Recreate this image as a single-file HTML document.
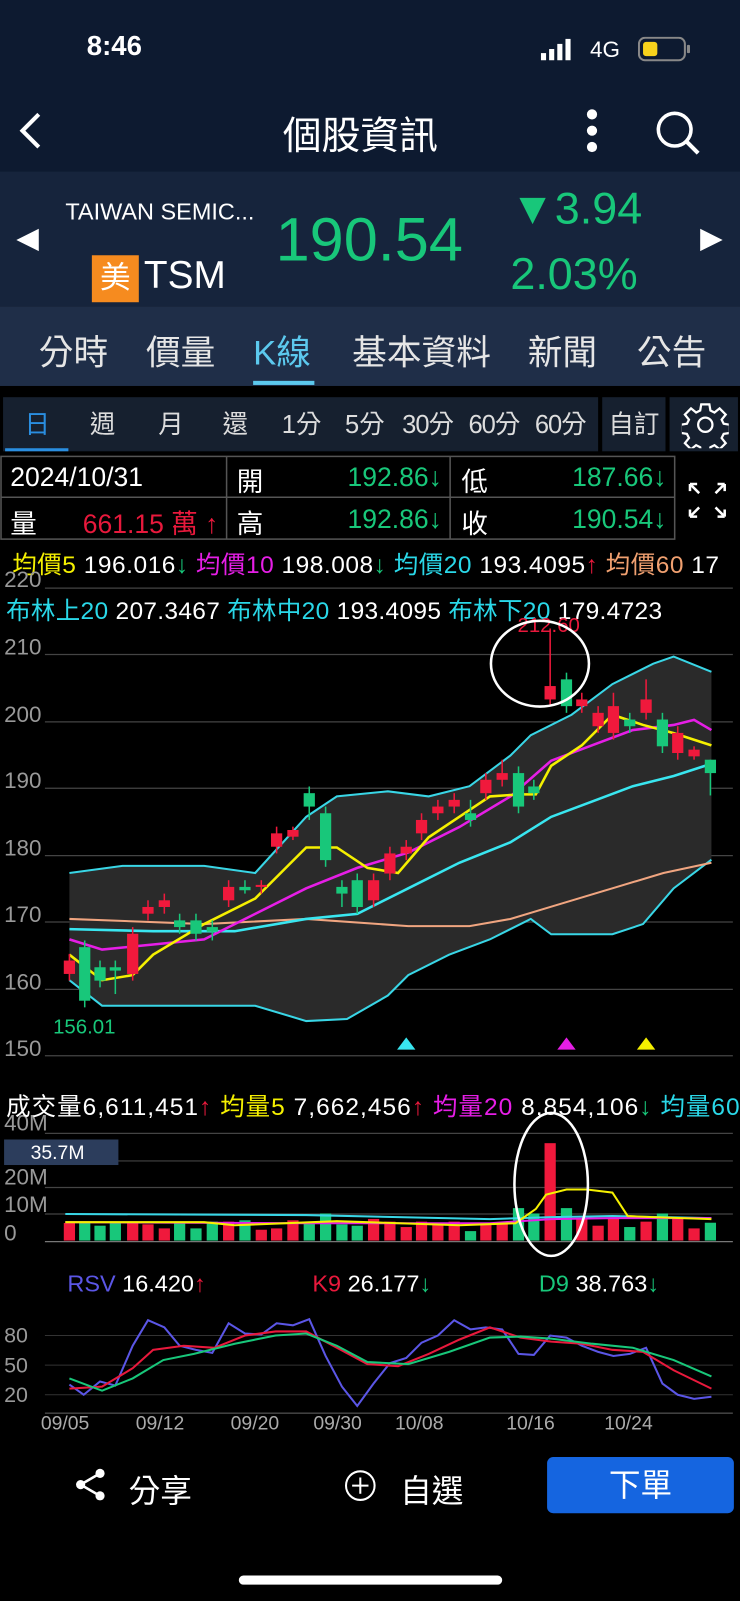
<!DOCTYPE html>
<html><head><meta charset="utf-8"><style>
html,body{margin:0;padding:0;background:#000;overflow:hidden;width:740px;height:1601px}
#w{position:absolute;left:0;top:0;width:725px;height:1568px;transform-origin:0 0;transform:scale(1.02069,1.02105);font-family:"Liberation Sans","Noto Sans CJK TC",sans-serif;color:#fff;background:#000}
.a{position:absolute;white-space:nowrap}
.r{position:absolute;white-space:nowrap;text-align:right}
</style></head><body><div id="w">
<div class="a" style="left:0;top:0;width:725px;height:168px;background:#0d1a30"></div>
<div class="a" style="left:85px;top:30px;font-size:27px;font-weight:bold">8:46</div>
<svg class="a" style="left:528px;top:38px" width="40" height="22"><rect x="2" y="14" width="5" height="7" fill="#fff"/><rect x="10" y="10" width="5" height="11" fill="#fff"/><rect x="18" y="5" width="5" height="16" fill="#fff"/><rect x="26" y="0" width="5" height="21" fill="#fff"/></svg>
<div class="a" style="left:578px;top:36px;font-size:22px">4G</div>
<svg class="a" style="left:625px;top:36px" width="52" height="26"><rect x="1" y="1" width="45" height="22" rx="6" fill="none" stroke="#888" stroke-width="2"/><rect x="5" y="5" width="14" height="14" rx="3" fill="#f7d21c"/><rect x="48" y="8" width="3" height="8" rx="1" fill="#888"/></svg>
<svg class="a" style="left:16px;top:108px" width="30" height="40"><path d="M22 4 L6 20 L22 36" stroke="#fff" stroke-width="4" fill="none"/></svg>
<div class="a" style="left:277px;top:102px;font-size:38px">個股資訊</div>
<svg class="a" style="left:568px;top:104px" width="24" height="50"><circle cx="12" cy="8" r="5" fill="#fff"/><circle cx="12" cy="24" r="5" fill="#fff"/><circle cx="12" cy="40" r="5" fill="#fff"/></svg>
<svg class="a" style="left:640px;top:106px" width="48" height="48"><circle cx="21" cy="21" r="16" stroke="#fff" stroke-width="3.5" fill="none"/><path d="M33 33 L44 44" stroke="#fff" stroke-width="4"/></svg>
<div class="a" style="left:0;top:168px;width:725px;height:132px;background:#16243c"></div>
<svg class="a" style="left:14px;top:222px" width="28" height="26"><path d="M24 2 L2 13 L24 24Z" fill="#fff"/></svg>
<svg class="a" style="left:684px;top:222px" width="28" height="26"><path d="M2 2 L24 13 L2 24Z" fill="#fff"/></svg>
<div class="a" style="left:64px;top:194px;font-size:23px">TAIWAN SEMIC...</div>
<div class="a" style="left:90px;top:250px;width:46px;height:46px;background:#f68b1f;font-size:30px;text-align:center;line-height:46px">美</div>
<div class="a" style="left:141px;top:249px;font-size:38px">TSM</div>
<div class="a" style="left:270px;top:200px;font-size:60px;color:#18c77a">190.54</div>
<div class="a" style="left:500px;top:180px;font-size:44px;color:#18c77a">▼3.94</div>
<div class="a" style="left:500px;top:244px;font-size:44px;color:#18c77a">2.03%</div>
<div class="a" style="left:0;top:300px;width:725px;height:78px;background:#1f2e48"></div>
<div class="a" style="left:38px;top:318px;font-size:34px;color:#e6e6e6">分時</div>
<div class="a" style="left:143px;top:318px;font-size:34px;color:#e6e6e6">價量</div>
<div class="a" style="left:248px;top:318px;font-size:34px;color:#5cc9ee">K線</div>
<div class="a" style="left:248px;top:373px;width:60px;height:4px;background:#5cc9ee"></div>
<div class="a" style="left:345px;top:318px;font-size:34px;color:#e6e6e6">基本資料</div>
<div class="a" style="left:517px;top:318px;font-size:34px;color:#e6e6e6">新聞</div>
<div class="a" style="left:624px;top:318px;font-size:34px;color:#e6e6e6">公告</div>
<div class="a" style="left:3px;top:389px;width:583px;height:53px;background:#16202f"></div>
<div class="a" style="left:590px;top:389px;width:62px;height:53px;background:#16202f"></div>
<div class="a" style="left:656px;top:389px;width:67px;height:53px;background:#16202f"></div>
<div class="a" style="left:5px;top:439px;width:62px;height:3px;background:#2a8ee0"></div>
<div class="a" style="left:0;top:396px;font-size:25px;color:#ddd;width:600px">
<span class="a" style="left:24px;color:#2a8ee0">日</span><span class="a" style="left:88px">週</span><span class="a" style="left:155px">月</span><span class="a" style="left:218px">還</span><span class="a" style="left:276px">1分</span><span class="a" style="left:338px">5分</span><span class="a" style="left:394px;letter-spacing:-1px">30分</span><span class="a" style="left:459px;letter-spacing:-1px">60分</span><span class="a" style="left:524px;letter-spacing:-1px">60分</span><span class="a" style="left:596px">自訂</span></div>
<svg class="a" style="left:668px;top:393px" width="46" height="46" viewBox="0 0 46 46"><path d="M19 3h8l1 6 4 2 5-4 6 6-4 5 2 4 6 1v8l-6 1-2 4 4 5-6 6-5-4-4 2-1 6h-8l-1-6-4-2-5 4-6-6 4-5-2-4-6-1v-8l6-1 2-4-4-5 6-6 5 4 4-2z" fill="none" stroke="#fff" stroke-width="2.2"/><circle cx="23" cy="23" r="7" fill="none" stroke="#fff" stroke-width="2.2"/></svg>
<svg class="a" style="left:0;top:446px" width="725" height="84"><g fill="none" stroke="#555" stroke-width="1.5"><rect x="1" y="1" width="660" height="81"/><line x1="1" y1="41" x2="661" y2="41"/><line x1="222" y1="1" x2="222" y2="82"/><line x1="441" y1="1" x2="441" y2="82"/></g>
<g stroke="#fff" stroke-width="2.5" fill="none"><path d="M676 28l9 9M676 28v7M676 28h7M710 28l-9 9M710 28v7M710 28h-7M676 60l9-9M676 60v-7M676 60h7M710 60l-9-9M710 60v-7M710 60h-7"/></g></svg>
<div class="a" style="left:10px;top:452px;font-size:26px">2024/10/31</div>
<div class="a" style="left:232px;top:452px;font-size:26px">開</div>
<div class="r" style="left:250px;width:183px;top:452px;font-size:26px;color:#18c77a">192.86↓</div>
<div class="a" style="left:452px;top:452px;font-size:26px">低</div>
<div class="r" style="left:470px;width:183px;top:452px;font-size:26px;color:#18c77a">187.66↓</div>
<div class="a" style="left:10px;top:493px;font-size:26px">量</div>
<div class="r" style="left:40px;width:174px;top:493px;font-size:26px;color:#e8193c">661.15 萬 ↑</div>
<div class="a" style="left:232px;top:493px;font-size:26px">高</div>
<div class="r" style="left:250px;width:183px;top:493px;font-size:26px;color:#18c77a">192.86↓</div>
<div class="a" style="left:452px;top:493px;font-size:26px">收</div>
<div class="r" style="left:470px;width:183px;top:493px;font-size:26px;color:#18c77a">190.54↓</div>
<div class="a" style="left:12px;top:533px;font-size:24px;letter-spacing:0.5px"><span style="color:#f5f000">均價5</span> 196.016<span style="color:#18c77a">↓</span> <span style="color:#e61ee6">均價10</span> 198.008<span style="color:#18c77a">↓</span> <span style="color:#2ad8e8">均價20</span> 193.4095<span style="color:#e8193c">↑</span> <span style="color:#f0a070">均價60</span> 17</div>
<div class="a" style="left:6px;top:578px;font-size:24px;letter-spacing:0.3px"><span style="color:#2ad8e8">布林上20</span> 207.3467 <span style="color:#2ad8e8">布林中20</span> 193.4095 <span style="color:#2ad8e8">布林下20</span> 179.4723</div>
<svg class="a" style="left:0;top:0" width="725" height="1568">
<g stroke="#444" stroke-width="1.2"><line x1="44" y1="576" x2="718" y2="576"/><line x1="44" y1="641" x2="718" y2="641"/><line x1="44" y1="707" x2="718" y2="707"/><line x1="44" y1="772" x2="718" y2="772"/><line x1="44" y1="838" x2="718" y2="838"/><line x1="44" y1="903" x2="718" y2="903"/><line x1="44" y1="969" x2="718" y2="969"/><line x1="44" y1="1034" x2="718" y2="1034"/>
<line x1="44" y1="1110" x2="718" y2="1110"/><line x1="44" y1="1137" x2="718" y2="1137"/><line x1="44" y1="1163" x2="718" y2="1163"/><line x1="44" y1="1189" x2="718" y2="1189"/><line x1="44" y1="1216" x2="718" y2="1216" stroke="#777"/></g>
<g fill="#999" font-size="22" font-family="Liberation Sans"><text x="4" y="575">220</text><text x="4" y="641">210</text><text x="4" y="707">200</text><text x="4" y="772">190</text><text x="4" y="838">180</text><text x="4" y="903">170</text><text x="4" y="969">160</text><text x="4" y="1034">150</text>
<text x="4" y="1107">40M</text><text x="4" y="1160">20M</text><text x="4" y="1187">10M</text><text x="4" y="1215">0</text></g>
<path d="M68 855 L120 848 200 848 250 855 300 800 330 780 380 775 420 780 460 770 500 740 520 720 560 700 600 670 640 650 660 643 697 658 L697 842 660 870 630 905 600 915 540 915 520 900 480 920 440 935 400 955 380 975 340 998 300 1000 250 985 150 985 100 985 68 960Z" fill="#2a2a2a"/>
<g fill="none" stroke-width="2"><polyline stroke="#39d6e6" points="68,855 120,848 200,848 250,855 300,800 330,780 380,775 420,780 460,770 500,740 520,720 560,700 600,670 640,650 660,643 697,658"/>
<polyline stroke="#39d6e6" points="68,960 100,985 150,985 250,985 300,1000 340,998 380,975 400,955 440,935 480,920 520,900 540,915 600,915 630,905 660,870 697,842"/>
<polyline stroke="#f0a580" points="68,900 200,905 300,900 400,907 460,907 500,900 540,888 600,870 650,855 697,845"/>
<polyline stroke="#39e6f0" stroke-width="2.5" points="68,910 150,912 230,912 300,900 350,895 400,870 450,845 500,825 540,800 580,785 620,770 660,760 697,748"/>
<polyline stroke="#e61ee6" stroke-width="2.5" points="68,920 100,930 150,925 200,920 250,895 300,870 350,850 400,835 450,810 500,780 540,745 580,730 620,715 660,710 680,705 697,715"/>
<polyline stroke="#f5f000" stroke-width="2.5" points="68,935 100,960 130,955 150,935 200,905 250,880 280,850 300,830 330,830 360,850 390,855 420,820 450,800 480,780 510,778 525,778 540,750 570,730 600,700 630,710 660,718 697,730"/></g>
<g id="c"></g>
<text x="52" y="1012" fill="#18c77a" font-size="20" font-family="Liberation Sans">156.01</text>
<text x="507" y="619" fill="#e8193c" font-size="20" font-family="Liberation Sans">212.60</text>
<ellipse cx="529" cy="650" rx="48" ry="42" fill="none" stroke="#fff" stroke-width="2.5"/>
<path d="M389 1028 L398 1016 L407 1028Z" fill="#39e6f0"/><path d="M546 1028 L555 1016 L564 1028Z" fill="#e61ee6"/><path d="M624 1028 L633 1016 L642 1028Z" fill="#f5f000"/>
<g id="v"></g>
<g fill="none" stroke-width="2"><polyline stroke="#39d6e6" points="64,1189 300,1190 480,1194 540,1192 600,1191 697,1193"/><polyline stroke="#e61ee6" points="64,1197 300,1198 480,1198 540,1194 600,1193 697,1193"/><polyline stroke="#f5f000" points="64,1197 200,1197 230,1200 330,1196 450,1200 505,1198 525,1184 535,1170 555,1165 575,1165 600,1168 615,1191 640,1192 697,1194"/></g>
<rect x="4" y="1116" width="112" height="25" fill="#2c3d5c"/><text x="30" y="1135" fill="#fff" font-size="19" font-family="Liberation Sans">35.7M</text>
<ellipse cx="540" cy="1160" rx="36" ry="70" fill="none" stroke="#fff" stroke-width="2.5"/>
<g stroke="#333" stroke-width="1"><line x1="44" y1="1308" x2="718" y2="1308"/><line x1="44" y1="1337" x2="718" y2="1337"/><line x1="44" y1="1366" x2="718" y2="1366"/><line x1="44" y1="1384" x2="718" y2="1384" stroke="#666"/></g>
<g fill="#999" font-size="21" font-family="Liberation Sans"><text x="4" y="1315">80</text><text x="4" y="1344">50</text><text x="4" y="1373">20</text></g>
<g fill="none" stroke-width="2"><polyline stroke="#5b56e6" points="68,1356 82,1366 98,1353 113,1357 130,1318 145,1293 161,1300 176,1318 192,1322 208,1325 224,1296 240,1306 256,1307 271,1296 287,1298 303,1292 319,1328 335,1358 350,1377 366,1355 382,1335 398,1330 413,1315 429,1308 445,1293 461,1302 476,1300 492,1302 508,1326 523,1327 539,1308 555,1310 570,1318 586,1324 601,1328 617,1326 633,1320 649,1355 664,1366 680,1370 697,1368"/>
<polyline stroke="#e8193c" points="68,1360 100,1358 130,1340 150,1322 180,1318 210,1320 240,1308 270,1304 300,1304 330,1320 360,1336 390,1338 420,1326 450,1312 480,1300 510,1310 540,1314 570,1316 600,1322 630,1324 660,1342 697,1360"/>
<polyline stroke="#18c77a" points="68,1350 100,1362 130,1350 160,1332 190,1326 230,1316 270,1308 300,1306 330,1318 360,1334 400,1336 440,1324 480,1310 510,1309 540,1311 580,1316 620,1320 660,1332 697,1348"/></g>
<g fill="#aaa" font-size="19" font-family="Liberation Sans"><text x="40" y="1400">09/05</text><text x="133" y="1400">09/12</text><text x="226" y="1400">09/20</text><text x="307" y="1400">09/30</text><text x="387" y="1400">10/08</text><text x="496" y="1400">10/16</text><text x="592" y="1400">10/24</text></g>
</svg>
<div class="a" style="left:6px;top:1064px;font-size:24px;letter-spacing:1px">成交量6,611,451<span style="color:#e8193c">↑</span> <span style="color:#f5f000">均量5</span> 7,662,456<span style="color:#e8193c">↑</span> <span style="color:#e61ee6">均量20</span> 8,854,106<span style="color:#18c77a">↓</span> <span style="color:#2ad8e8">均量60</span></div>
<div class="a" style="left:66px;top:1244px;font-size:23px"><span style="color:#5b56e6">RSV</span> 16.420<span style="color:#e8193c">↑</span></div>
<div class="a" style="left:306px;top:1244px;font-size:23px"><span style="color:#e8193c">K9</span> 26.177<span style="color:#18c77a">↓</span></div>
<div class="a" style="left:528px;top:1244px;font-size:23px"><span style="color:#18c77a">D9</span> 38.763<span style="color:#18c77a">↓</span></div>
<svg class="a" style="left:72px;top:1437px" width="34" height="34"><circle cx="26" cy="6" r="4.5" fill="#fff"/><circle cx="7" cy="17" r="4.5" fill="#fff"/><circle cx="26" cy="28" r="4.5" fill="#fff"/><path d="M26 6 L7 17 L26 28" stroke="#fff" stroke-width="2.5" fill="none"/></svg>
<div class="a" style="left:126px;top:1435px;font-size:31px">分享</div>
<svg class="a" style="left:336px;top:1438px" width="34" height="34"><circle cx="17" cy="17" r="14" fill="none" stroke="#fff" stroke-width="2"/><path d="M17 9v16M9 17h16" stroke="#fff" stroke-width="2"/></svg>
<div class="a" style="left:392px;top:1435px;font-size:31px">自選</div>
<div class="a" style="left:536px;top:1427px;width:183px;height:55px;background:#1565e0;border-radius:6px;font-size:31px;text-align:center;line-height:55px">下單</div>
<div class="a" style="left:234px;top:1543px;width:258px;height:9px;border-radius:5px;background:#fff"></div>
</div>
<script>
var D=[[68,161,163,164,160],[83,165,157,166,156.01],[98,162,160,163,159],[113,162,161.5,163,158],[130,161,167,168,160],[145,170,171,172,169],[161,171,172,173,170],[176,169,168,170,167],[192,169,167,170,166],[208,168,167.3,169,166],[224,172,174,175,171],[240,174,173.5,175,173],[256,174,174.3,175,173],[271,180,182,183,179],[287,181.5,182.5,183,181],[303,188,186,189,184],[319,185,178,186,177],[335,174,173,175,171],[350,175,171,176,170],[366,172,175,176,171],[382,176,179,180,175],[398,179,180,181,178],[413,182,184,185,181],[429,185,186,187,184],[445,186,187,188,185],[461,185,184,187,183],[476,188,190,191,187],[492,190,191,193,189],[508,191,186,192,185],[523,189,188,190,187],[539,202,204,212.6,201],[555,205,201,206,200],[570,201,202,203,200],[586,198,200,201,197],[601,197,201,203,196],[617,199,198,200,197],[633,200,202,205,199],[649,199,195,200,194],[664,194,197,198,193],[680,193.5,194.5,195,193],[696,193,191,193,187.66]];
function y(p){return 567+(220-p)*6.557}
var s='',v='';
var vols=[6.5,7,5.5,7,7,6,4.5,7,4.5,7,7,7.5,4,4.5,7.5,7,10,6,5.5,8,7,5,7,6,7,3.5,6,6,12,10,36,12,8,5.5,8,5,7,10,8,4.5,6.6];
D.forEach(function(d,i){var up=d[2]>=d[1],c=up?'#f0193c':'#18c77a';var t=y(Math.max(d[1],d[2])),b=y(Math.min(d[1],d[2]));if(b-t<2)b=t+2;
s+='<line x1="'+d[0]+'" x2="'+d[0]+'" y1="'+y(d[3])+'" y2="'+y(d[4])+'" stroke="'+c+'" stroke-width="1.5"/><rect x="'+(d[0]-5.5)+'" y="'+t+'" width="11" height="'+(b-t)+'" fill="'+c+'"/>';
var h=vols[i]*2.65;v+='<rect x="'+(d[0]-5.5)+'" y="'+(1215-h)+'" width="11" height="'+h+'" fill="'+c+'"/>';});
document.getElementById('c').innerHTML=s;document.getElementById('v').innerHTML=v;
</script>
</body></html>
